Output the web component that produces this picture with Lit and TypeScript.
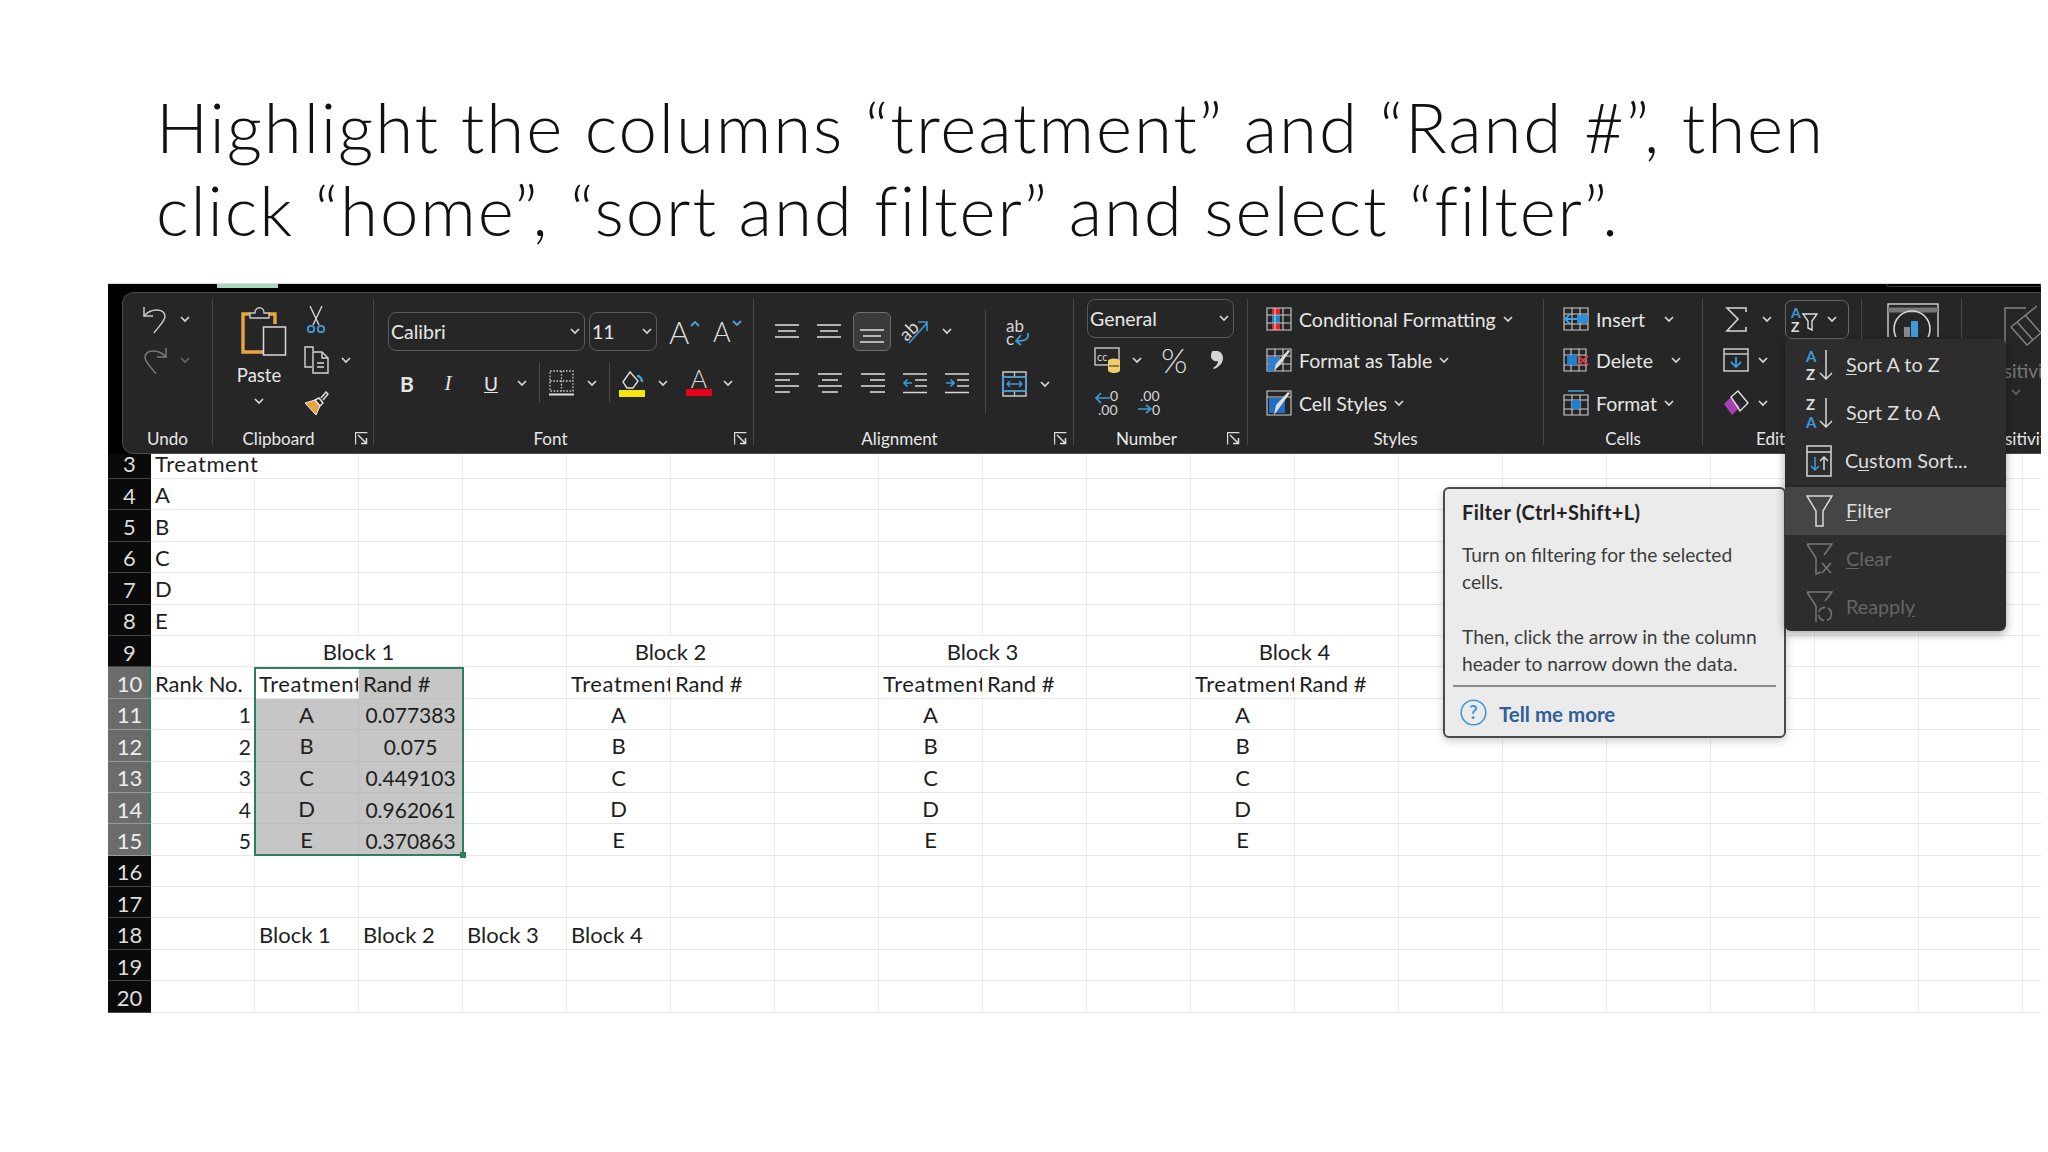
import { LitElement, html, css, svg } from "lit";
import { customElement } from "lit/decorators.js";

const W = "#d6d6d6";
const B = "#3f9bd8";
const chev = (c = "#d8d8d8") => html`<svg class="chev" width="10" height="7" viewBox="0 0 10 7" fill="none" stroke=${c} stroke-width="1.7"><path d="M1 1l4 4 4-4"/></svg>`;
const launcher = html`<svg class="launch" width="13" height="13" viewBox="0 0 13 13" fill="none" stroke="#ddd" stroke-width="1.2"><path d="M.6 12.4V.6h11.8"/><path d="M3 3l8 8M11.5 6v5.5H6" stroke-width="1.5"/></svg>`;
const lines = (w: number, h: number, l: number[][], hl = W) => html`<svg width=${w} height=${h} viewBox="0 0 ${w} ${h}" stroke=${hl} stroke-width="1.6">${l.map((a) => svg`<line x1=${a[0]} x2=${a[1]} y1=${a[2]} y2=${a[2]} stroke=${a[3] ? B : hl}/>`)}</svg>`;

const I: Record<string, unknown> = {
  undo: html`<svg width="26" height="27" viewBox="0 0 26 27" fill="none" stroke="#c9c9c9" stroke-width="1.5"><path d="M2 1v9h9"/><path d="M2 10C9 2 22 2 23 10c.5 5-7 11-11 17"/></svg>`,
  redo: html`<svg width="26" height="27" viewBox="0 0 26 27" fill="none" stroke="#7a7a7a" stroke-width="1.5"><path d="M24 1v9h-9"/><path d="M24 10C17 2 4 2 3 10c-.5 5 7 11 11 17"/></svg>`,
  paste: html`<svg class="pasteic" width="46" height="50" viewBox="0 0 46 50" fill="none"><path d="M9 8H2v38h20" stroke="#e9a63f" stroke-width="3.4"/><path d="M28 8h6v10" stroke="#e9a63f" stroke-width="3.4"/><path d="M9 12V7h5c0-7 9-7 9 0h5v5z" stroke="#c9c9c9" stroke-width="1.4" fill="#262626"/><rect x="22.5" y="21" width="22" height="28" stroke="#d9d9d9" stroke-width="1.5" fill="#262626"/></svg>`,
  cut: html`<svg width="26" height="27" viewBox="0 0 26 27" fill="none" stroke="#d6d6d6" stroke-width="1.4"><path d="M7 0l9 19M19 0l-9 19"/><circle cx="8" cy="23" r="3.2" stroke="#3f9bd8" stroke-width="1.8"/><circle cx="18" cy="23" r="3.2" stroke="#3f9bd8" stroke-width="1.8"/></svg>`,
  copy: html`<svg width="26" height="28" viewBox="0 0 26 28" fill="none" stroke="#d6d6d6" stroke-width="1.4"><path d="M10 5V1H2v20h7"/><path d="M10 6h9l6 6v15H10z"/><path d="M19 6v6h6M14 17h7M14 21h7"/></svg>`,
  brush: html`<svg width="26" height="25" viewBox="0 0 26 25" fill="none"><path d="M2 12l10-3 5 6-4 9z" fill="#e8a33f" stroke="#eee" stroke-width="1"/><path d="M12 9l5 6 3-3-4-5zM18 7l5-6 2 2-5 6" stroke="#e6e6e6" stroke-width="1.4"/></svg>`,
  borders: html`<svg width="25" height="26" viewBox="0 0 25 26" fill="none" stroke="#c8c8c8" stroke-width="1.3" stroke-dasharray="1.6 1.6"><rect x="1" y="1" width="23" height="20"/><path d="M12.5 1v20M1 11h23"/><path d="M0 24.5h25" stroke="#ddd" stroke-width="2" stroke-dasharray="none"/></svg>`,
  fill: html`<svg width="26" height="27" viewBox="0 0 26 27" fill="none"><path d="M4 12L11 2l8 9-5 7H8z" stroke="#ddd" stroke-width="1.4"/><path d="M18 6c3 0 5 3 5 6" stroke="#4aa3df" stroke-width="2.4"/><rect y="20" width="26" height="7" fill="#f5e60f"/></svg>`,
  fcolor: html`<svg width="26" height="28" viewBox="0 0 26 28"><text x="13" y="19" text-anchor="middle" font-family="Lato" font-weight="300" font-size="25" fill="#ddd">A</text><rect y="20" width="26" height="7" fill="#e8001b"/></svg>`,
  orient: html`<svg width="27" height="25" viewBox="0 0 27 25" fill="none"><text x="-1" y="19" transform="rotate(-45 7 13)" font-family="Lato" font-size="18" fill="#d6d6d6">ab</text><path d="M8 24L26 4M17 3h9v9" stroke="#3f9bd8" stroke-width="1.6"/></svg>`,
  wrap: html`<svg width="24" height="26" viewBox="0 0 24 26" fill="none"><text x="0" y="12" font-family="Lato" font-size="17" fill="#d6d6d6">ab</text><text x="0" y="25" font-family="Lato" font-size="17" fill="#d6d6d6">c</text><path d="M22 13c1 6-2 8-12 8M15 15l-5 6 5 4" stroke="#3f9bd8" stroke-width="1.8"/></svg>`,
  outd: html`<svg width="24" height="21" viewBox="0 0 24 21" fill="none"><path d="M0 1h24M12 7h12M12 13h12M0 19.5h24" stroke="#d6d6d6" stroke-width="1.6"/><path d="M9 10H1M4.500 6.500L1 10l3.500 3.500" stroke="#3f9bd8" stroke-width="1.7"/></svg>`,
  ind: html`<svg width="24" height="21" viewBox="0 0 24 21" fill="none"><path d="M0 1h24M12 7h12M12 13h12M0 19.500h24" stroke="#d6d6d6" stroke-width="1.6"/><path d="M1 10h8M5.500 6.500L9 10l-3.500 3.500" stroke="#3f9bd8" stroke-width="1.7"/></svg>`,
  merge: html`<svg width="25" height="26" viewBox="0 0 25 26" fill="none"><rect x="1" y="1" width="23" height="24" stroke="#d6d6d6" stroke-width="1.4"/><path d="M1 6h23M1 20h23M12.5 1v5M12.5 20v5" stroke="#d6d6d6" stroke-width="1.2"/><rect x="1" y="6" width="23" height="14" stroke="#3f9bd8" stroke-width="1.5"/><path d="M5 13h15M8 10l-3 3 3 3M17 10l3 3-3 3" stroke="#3f9bd8" stroke-width="1.3"/></svg>`,
  acc: html`<svg width="27" height="27" viewBox="0 0 27 27" fill="none"><rect x="1" y="1" width="24" height="17" stroke="#d6d6d6" stroke-width="1.3"/><text x="3" y="14" font-family="Lato" font-size="11" fill="#d6d6d6">cc</text><ellipse cx="20" cy="14" rx="6" ry="2.5" fill="#f0cf6b"/><path d="M14 14v9c0 4 12 4 12 0v-9z" fill="#f0cf6b"/><path d="M15 19h10" stroke="#262626"/></svg>`,
  comma: html`<svg width="13" height="18" viewBox="0 0 13 18"><path d="M3 0c6-1 10 2 10 7 0 5-4 9-9 11l-1-1c3-2 5-4 5-7-3 1-7-1-7-5 0-3 1-5 2-5z" fill="#d6d6d6"/></svg>`,
  incd: html`<svg width="26" height="26" viewBox="0 0 26 26" fill="none"><path d="M16 8H2M7 3L2 8l5 5" stroke="#3f9bd8" stroke-width="1.7"/><text x="16" y="11" font-family="Lato" font-size="14" fill="#d6d6d6">0</text><text x="4" y="25" font-family="Lato" font-size="14" fill="#d6d6d6">.00</text></svg>`,
  decd: html`<svg width="26" height="26" viewBox="0 0 26 26" fill="none"><text x="4" y="11" font-family="Lato" font-size="14" fill="#d6d6d6">.00</text><path d="M2 19h12M10 15l5 4-5 4" stroke="#3f9bd8" stroke-width="1.7"/><text x="16" y="25" font-family="Lato" font-size="14" fill="#d6d6d6">0</text></svg>`,
  cf: html`<svg width="26" height="24" viewBox="0 0 26 24" fill="none"><rect x="6" y="1" width="8" height="6" fill="#e8232a"/><rect x="6" y="17" width="8" height="6" fill="#e8232a"/><rect x="6" y="8" width="8" height="8" fill="#1f7fd0"/><path d="M1 1h24v22H1zM1 8h24M1 16h24M9 1v22M17 1v22" stroke="#cfcfcf" stroke-width="1.1"/></svg>`,
  table: html`<svg width="26" height="24" viewBox="0 0 26 24" fill="none"><path d="M1 1h24v22H1zM1 8h24M1 16h24M9 1v22M17 1v22" stroke="#cfcfcf" stroke-width="1.1"/><path d="M2 9h12v8H2zM2 17h7v6H2z" fill="#2f7fd0"/><path d="M8 23l6-6 10-14-2-1L10 16z" fill="#ddd"/></svg>`,
  cstyle: html`<svg width="26" height="26" viewBox="0 0 26 26" fill="none"><path d="M1 1h24v24H1zM1 7h24" stroke="#cfcfcf" stroke-width="1.1"/><path d="M3 8h16v15H3z" fill="#1f6fc8"/><path d="M8 25l6-8 10-14-2-1L10 15z" fill="#ddd"/></svg>`,
  insert: html`<svg width="26" height="24" viewBox="0 0 26 24" fill="none"><path d="M1 1h24v22H1zM1 7h24M1 17h24M9 1v22M17 1v22" stroke="#cfcfcf" stroke-width="1.1"/><rect x="14" y="8" width="11" height="8" fill="#2a8fdc"/><path d="M14 12H2M7 7l-5 5 5 5" stroke="#3fa3e8" stroke-width="1.9"/></svg>`,
  del: html`<svg width="26" height="24" viewBox="0 0 26 24" fill="none"><path d="M1 1h22v22H1zM1 7h22M1 17h22M8 1v22M16 1v22" stroke="#cfcfcf" stroke-width="1.1"/><rect x="4" y="7" width="10" height="10" fill="#1f7fd0"/><path d="M15 8l10 9M25 8l-10 9" stroke="#e8353a" stroke-width="1.8"/></svg>`,
  fmt: html`<svg width="26" height="26" viewBox="0 0 26 26" fill="none"><path d="M1 5h24v20H1zM1 10h24M1 19h24M9 5v20M17 5v20" stroke="#cfcfcf" stroke-width="1.1"/><rect x="9" y="10" width="8" height="9" fill="#1f7fd0"/><path d="M5 1h16" stroke="#3f9bd8" stroke-width="1.6"/></svg>`,
  sigma: html`<svg width="26" height="25" viewBox="0 0 26 25" fill="none" stroke="#d6d6d6" stroke-width="1.6"><path d="M23 5V1H4l11 11L4 24h19v-4"/></svg>`,
  efill: html`<svg width="26" height="24" viewBox="0 0 26 24" fill="none"><rect x="1" y="1" width="24" height="22" stroke="#d6d6d6" stroke-width="1.4"/><path d="M1 6h24" stroke="#d6d6d6" stroke-width="1.4"/><path d="M13 9v10M8 14l5 5 5-5" stroke="#3f9bd8" stroke-width="1.8"/></svg>`,
  eraser: html`<svg width="26" height="26" viewBox="0 0 26 26" fill="none"><path d="M1 14L9 25l8-8L8 7z" fill="#a63fb3"/><path d="M8 7l7-6 10 12-8 8z" stroke="#e2e2e2" stroke-width="1.4"/></svg>`,
  sortf: html`<svg width="27" height="27" viewBox="0 0 27 27" fill="none"><text x="0" y="12" font-family="Lato" font-weight="700" font-size="14" fill="#3f9bd8">A</text><text x="0" y="26" font-family="Lato" font-weight="700" font-size="14" fill="#ddd">Z</text><path d="M12 8h14l-5 7v9l-4-2v-7z" stroke="#ddd" stroke-width="1.4"/></svg>`,
  addin: html`<svg width="52" height="34" viewBox="0 0 52 34" fill="none"><rect x="1" y="1" width="50" height="60" stroke="#d0d0d0" stroke-width="1.4"/><path d="M1 7h50" stroke="#777" stroke-width="5"/><circle cx="25" cy="26" r="18" stroke="#d6d6d6" stroke-width="1.6"/><rect x="17" y="24" width="6" height="10" fill="#888"/><rect x="24" y="18" width="7" height="16" fill="#3f9bd8"/></svg>`,
  sens: html`<svg class="sensic" width="77" height="46" viewBox="0 0 77 46" fill="none" stroke="#858585" stroke-width="1.4"><path d="M61 3H40v43"/><path d="M46 22L72 1M46 22l16 18 15-13"/><path d="M52 17l16 18M60 10l16 18"/></svg>`,
  az: html`<svg width="27" height="32" viewBox="0 0 27 32" fill="none"><text x="0" y="13" font-family="Lato" font-weight="700" font-size="15" fill="#3f9bd8">A</text><text x="0" y="31" font-family="Lato" font-weight="700" font-size="15" fill="#ddd">Z</text><path d="M20 1v29M14 24l6 6 6-6" stroke="#d6d6d6" stroke-width="1.5"/></svg>`,
  za: html`<svg width="27" height="32" viewBox="0 0 27 32" fill="none"><text x="0" y="13" font-family="Lato" font-weight="700" font-size="15" fill="#ddd">Z</text><text x="0" y="31" font-family="Lato" font-weight="700" font-size="15" fill="#3f9bd8">A</text><path d="M20 1v29M14 24l6 6 6-6" stroke="#d6d6d6" stroke-width="1.5"/></svg>`,
  custom: html`<svg width="26" height="32" viewBox="0 0 26 32" fill="none" stroke="#d6d6d6" stroke-width="1.5"><rect x="1" y="1" width="24" height="30"/><path d="M1 7h24"/><path d="M9 12v13M5 21l4 4 4-4" stroke="#3f9bd8"/><path d="M18 25V12M14 16l4-4 4 4"/></svg>`,
  filter: html`<svg width="27" height="32" viewBox="0 0 27 32" fill="none" stroke="#d8d8d8" stroke-width="1.5"><path d="M1 1h25L17 16v15h-7V16z"/></svg>`,
  clear: html`<svg width="27" height="32" viewBox="0 0 27 32" fill="none" stroke="#777" stroke-width="1.5"><path d="M1 1h25l-8 11M1 1l9 14v16l5-2"/><path d="M16 20l9 10M25 20l-9 10"/></svg>`,
  reapply: html`<svg width="27" height="32" viewBox="0 0 27 32" fill="none" stroke="#777" stroke-width="1.5"><path d="M1 1h25l-7 9M1 1l9 14v16"/><circle cx="19" cy="23" r="6.5" stroke-dasharray="8 3"/></svg>`,
  help: html`<svg width="27" height="27" viewBox="0 0 27 27"><circle cx="13.5" cy="13.5" r="12.3" fill="none" stroke="#3f97d2" stroke-width="1.6"/><text x="13.5" y="19.5" text-anchor="middle" font-family="Lato" font-size="18" fill="#3f97d2">?</text></svg>`,
};

const COLS = "ABCDEFGHIJKLMNOPQRS".split("");
type Cell = { t: string; k?: string };
const DATA: Record<string, Cell> = {
  A3: { t: "Treatment", k: "vis" },
  A4: { t: "A" }, A5: { t: "B" }, A6: { t: "C" }, A7: { t: "D" }, A8: { t: "E" },
  A10: { t: "Rank No." }, B10: { t: "Treatment", k: "tr" }, C10: { t: "Rand #" },
  E10: { t: "Treatment", k: "tr" }, F10: { t: "Rand #" }, H10: { t: "Treatment", k: "tr" }, I10: { t: "Rand #" }, K10: { t: "Treatment", k: "tr" }, L10: { t: "Rand #" },
  B18: { t: "Block 1" }, C18: { t: "Block 2" }, D18: { t: "Block 3" }, E18: { t: "Block 4" },
};
const vals = ["0.077383", "0.075", "0.449103", "0.962061", "0.370863"];
["A", "B", "C", "D", "E"].forEach((l, i) => {
  const r = 11 + i;
  DATA["A" + r] = { t: String(i + 1), k: "r" };
  DATA["C" + r] = { t: vals[i], k: "c" };
  for (const c of ["B", "E", "H", "K"]) DATA[c + r] = { t: l, k: "c" };
});
const MERGE: Record<string, string> = { B: "Block 1", E: "Block 2", H: "Block 3", K: "Block 4" };

@customElement("app-root")
export class AppRoot extends LitElement {
  static styles = css`
    :host { display: block; width: 2048px; height: 1152px; background: #fff; overflow: hidden; font-family: Lato, "Open Sans", sans-serif; }
    .title { margin: 0; padding: 86px 0 32px 156px; font-weight: 300; font-size: 69px; letter-spacing: 1.9px; line-height: 82.5px; color: #111; height: 165px; white-space: nowrap; }
    .shot { position: relative; margin-left: 108px; width: 1933px; overflow: hidden; }
    .band { height: 9px; background: #000; display: flex; border-top: 1px solid #ddd; box-sizing: border-box; }
    .tab { margin-left: 109px; width: 61px; height: 4px; background: #a9d6c0; }
    .tab2 { margin-left: auto; width: 155px; height: 3px; border: 1px solid #3a3a3a; border-top: none; border-radius: 0 0 0 6px; box-sizing: border-box; }
    .rwrap { background: #000; padding-left: 14px; }
    .ribbon { height: 162px; background: #262626; border: 1px solid #4a4a4a; border-right: none; border-radius: 12px 0 0 12px; display: flex; box-sizing: border-box; padding-top: 6px; color: #e6e6e6; font-size: 19.5px; white-space: nowrap; }
    .g { flex: none; height: 146px; display: flex; flex-direction: column; box-sizing: border-box; border-right: 1px solid #484848; }
    .body { flex: 1; min-height: 0; }
    .lab { height: 20px; display: flex; align-items: center; font-size: 17px; color: #e8e8e8; transform: translateY(3px); }
    .lab span { flex: 1; text-align: center; }
    .launch { flex: none; }
    .g3 { display: grid; grid-template-rows: 40px 42px 44px; align-items: center; justify-items: start; }
    .undo { width: 90px; } .undo .g3 { padding-left: 19px; grid-template-columns: 38px auto; }
    .clip { width: 161px; } .clip .body { padding-left: 20px; display: flex; }
    .pastec { width: 52px; margin-right: 18px; display: flex; flex-direction: column; align-items: center; padding-top: 7px; }
    .pasteic { margin-left: 10px; }
    .pastec span { margin-top: 8px; font-size: 18.5px; }
    .pastec .chev { margin-top: 12px; }
    .clip .g3 { grid-template-columns: 38px auto; }
    .clip .lab .launch { margin: 0 5px 0 11px; }
    .font { width: 380px; }
    .rows { padding-top: 13px; }
    .rw { height: 39px; display: grid; align-items: center; justify-items: start; }
    .rw + .rw { margin-top: 12px; height: 40px; }
    .dd { box-sizing: border-box; height: 39px; border: 1.4px solid #5a5a5a; border-radius: 8px; display: flex; align-items: center; justify-content: space-between; padding: 0 4px 0 2px; font-size: 19.5px; }
    .f1 { padding-left: 14px; grid-template-columns: 201px 80px 44px auto; }
    .d1 { width: 197px; } .d2 { width: 68px; }
    .f2 { padding-left: 21px; grid-template-columns: 41px 43px 38px 22px 10px 38px 22px 10px 39px 28px 37px auto; }
    .ff { width: 24px; text-align: center; font-size: 21px; }
    .bold { font-weight: 700; } .ital { font-family: "Liberation Serif", serif; font-style: italic; } .und { text-decoration: underline; font-size: 19px; }
    .vs { width: 1px; height: 40px; background: #4a4a4a; }
    .AA { font-weight: 300; font-size: 31px; line-height: 30px; position: relative; display: block; color: #ddd; }
    .AA.sm { font-size: 27px; }
    .AA svg { position: absolute; left: 100%; top: 3px; margin-left: 1px; }
    .font .lab .launch { margin: 0 6px 0 7px; }
    .align { width: 320px; } .align .body { display: flex; }
    .al { width: 231px; }
    .a1 { padding-left: 21px; grid-template-columns: 42px 36px 48px 41px auto; }
    .a2 { padding-left: 21px; grid-template-columns: 43px 43px 42px 42px auto; }
    .a1b { box-sizing: border-box; width: 38px; height: 39px; border: 1.4px solid #6e6e6e; border-radius: 6px; background: #3a3a3a; display: flex; align-items: flex-end; justify-content: center; padding-bottom: 5px; }
    .vl { width: 1px; height: 103px; margin-top: 11px; background: #4a4a4a; }
    .ar { padding-top: 21px; }
    .ar > svg { display: block; margin-left: 20px; }
    .mrg { margin: 25px 0 0 16px; display: grid; grid-template-columns: 38px auto; align-items: center; justify-items: start; }
    .align .lab .launch { margin: 0 6px 0 9px; }
    .number { width: 174px; }
    .number .dd { margin: 0 0 0 13px; width: 147px; height: 39px; }
    .n2 { padding-left: 20px; height: 42px; margin-top: 1px; display: grid; grid-template-columns: 38px 29px 49px auto; align-items: center; justify-items: start; }
    .n3 { padding-left: 20px; height: 43px; display: grid; grid-template-columns: 42px auto; align-items: center; justify-items: start; }
    .pct { font-weight: 300; font-size: 34px; line-height: 34px; color: #ddd; }
    .number .lab .launch { margin: 0 7px 0 8px; }
    .styles { width: 296px; } .styles .g3 { padding-left: 18px; }
    .it { display: flex; align-items: center; gap: 7px; }
    .cells { width: 159px; } .cells .g3 { padding-left: 19px; }
    .c3 { display: grid; align-items: center; justify-items: start; grid-template-columns: 33px 68px auto; }
    .c3.d { grid-template-columns: 33px 75px auto; }
    .edit { width: 159px; } .edit .g3 { padding-left: 20px; }
    .e1 { display: grid; grid-template-columns: 39px 23px auto; align-items: center; justify-items: start; }
    .e2 { display: grid; grid-template-columns: 35px auto; align-items: center; justify-items: start; }
    .sortb { box-sizing: border-box; width: 64px; height: 39px; border: 1.4px solid #666; border-radius: 7px; display: flex; align-items: center; gap: 9px; padding-left: 5px; }
    .addin { width: 100px; } .addin .body { padding: 4px 0 0 25px; overflow: hidden; }
    .sens { width: 108px; border-right: none; } .sens .body { padding-top: 6px; display: flex; flex-direction: column; align-items: center; }
    .sensic { align-self: flex-start; margin-left: 3px; flex: none; }
    .stx { color: #777; font-size: 19px; margin-top: 8px; }
    .sens .chev { margin-top: 7px; }
    .sheet { display: grid; grid-template-columns: 43px repeat(19, 104px); grid-template-rows: 25px repeat(17, 31.4px); font-size: 22px; color: #1e1e1e; position: relative; }
    .rh { background: #0a0a0a; color: #dcdcdc; border-bottom: 1.4px solid #444; box-sizing: border-box; display: flex; align-items: center; justify-content: center; padding-top: 2px; }
    .rh.on { background: #6b6b6b; color: #eee; border-bottom-color: #999; box-shadow: inset -2px 0 0 #2e7d5b; }
    .rh.first { padding: 0 0 5px; }
    .cell { box-sizing: border-box; border-right: 1px solid #ececef; border-bottom: 1px solid #e6e6e6; padding: 2px 4px 0; line-height: 1; display: flex; align-items: center; overflow: hidden; white-space: nowrap; }
    .cell.first { padding: 0 4px 5px; }
    .cell.vis { overflow: visible; border-right: none; }
    .cell.r { justify-content: flex-end; padding-right: 3px; font-size: 21px; }
    .cell.c, .cell.m { justify-content: center; }
    .cell.m { grid-column: span 2; }
    .cell.tr, .cell.vis { letter-spacing: .6px; }
    .cell.sel { background: #c6c6c6; border-color: #bdbdbd; }
    .cell.num { font-size: 21px; }
    .selbox { position: absolute; left: 146px; top: 213px; width: 210px; height: 189px; border: 2px solid #2e7d5b; box-sizing: border-box; pointer-events: none; }
    .selbox i { position: absolute; right: -4px; bottom: -4px; width: 6px; height: 6px; background: #2e7d5b; }
    .menu { position: absolute; left: 1677px; top: 56px; width: 221px; height: 292px; box-sizing: border-box; padding-top: 2px; background: #2d2d2d; border-radius: 6px; box-shadow: 0 3px 10px rgba(0,0,0,.35); color: #dedede; font-size: 19.8px; z-index: 3; }
    .mi { height: 48px; display: flex; align-items: center; gap: 13px; padding-left: 21px; }
    .mi span { transform: translateY(-1px); }
    .mi.hi { background: #454545; }
    .mi.dim { color: #666; }
    .msep { height: 2px; background: #272727; }
    .mi u { text-underline-offset: 2px; }
    .tip { position: absolute; left: 1335px; top: 204px; width: 343px; height: 251px; box-sizing: border-box; border: 2px solid #4a4a4a; border-radius: 6px; background: #ebebeb; box-shadow: 0 3px 10px rgba(0,0,0,.2); padding: 10px 17px 0; color: #3c3c3c; font-size: 19.2px; z-index: 2; }
    .tip h4 { margin: 0; font-size: 20px; letter-spacing: .4px; line-height: 26px; color: #222; font-weight: 700; }
    .tip p { margin: 16px 0 0; line-height: 27.3px; white-space: nowrap; }
    .tip hr { margin: 8px -9px 0; height: 1.4px; border: none; background: #8a8a8a; }
    .tf { display: flex; align-items: center; gap: 12px; margin: 12px 0 0 -2px; color: #2f5f9a; font-weight: 700; font-size: 20.5px; }
    .tf span { transform: translateY(2px); }
  `;

  private sheet() {
    const out: unknown[] = [];
    for (let r = 3; r <= 20; r++) {
      const first = r === 3 ? "first" : "";
      out.push(html`<div class="rh ${r >= 10 && r <= 15 ? "on" : ""} ${first}">${r}</div>`);
      let i = 0;
      while (i < COLS.length) {
        const c = COLS[i];
        if (r === 9 && MERGE[c]) {
          out.push(html`<div class="cell m">${MERGE[c]}</div>`);
          i += 2;
          continue;
        }
        const d = DATA[c + r];
        const sel = (r === 10 && c === "C") || (r >= 11 && r <= 15 && (c === "B" || c === "C"));
        const num = r >= 11 && r <= 15 && c === "C" ? "num" : "";
        out.push(html`<div class="cell ${d?.k ?? ""} ${sel ? "sel" : ""} ${num} ${first}">${d?.t ?? ""}</div>`);
        i++;
      }
    }
    return out;
  }

  render() {
    const t = [[0, 24, 1], [3, 21, 7], [0, 24, 13]];
    return html`
      <h1 class="title">Highlight the columns “treatment” and “Rand #”, then<br />click “home”, “sort and filter” and select “filter”.</h1>
      <div class="shot">
        <div class="band"><div class="tab"></div><div class="tab2"></div></div>
        <div class="rwrap"><div class="ribbon">
          <div class="g undo"><div class="body g3">${I.undo}${chev()}${I.redo}${chev("#666")}</div><div class="lab"><span>Undo</span></div></div>
          <div class="g clip"><div class="body">
              <div class="pastec">${I.paste}<span>Paste</span>${chev()}</div>
              <div class="g3">${I.cut}<i></i>${I.copy}${chev()}${I.brush}</div>
            </div><div class="lab"><span>Clipboard</span>${launcher}</div></div>
          <div class="g font"><div class="body rows">
              <div class="rw f1">
                <div class="dd d1"><span>Calibri</span>${chev()}</div>
                <div class="dd d2"><span>11</span>${chev()}</div>
                <span class="AA">A<svg width="10" height="7" viewBox="0 0 10 7" fill="none" stroke="#4aa3df" stroke-width="1.8"><path d="M1 6l4-4 4 4"/></svg></span>
                <span class="AA sm">A<svg width="10" height="7" viewBox="0 0 10 7" fill="none" stroke="#4aa3df" stroke-width="1.8"><path d="M1 1l4 4 4-4"/></svg></span>
              </div>
              <div class="rw f2">
                <span class="ff bold">B</span><span class="ff ital">I</span><span class="ff und">U</span>${chev()}<i class="vs"></i>${I.borders}${chev()}<i class="vs"></i>${I.fill}${chev()}${I.fcolor}${chev()}
              </div>
            </div><div class="lab"><span>Font</span>${launcher}</div></div>
          <div class="g align"><div class="body">
              <div class="al rows">
                <div class="rw a1">${lines(24, 16, t)}${lines(24, 16, t)}<div class="a1b">${lines(24, 16, t)}</div>${I.orient}${chev()}</div>
                <div class="rw a2">
                  ${lines(24, 21, [[0, 24, 1], [0, 15, 7], [0, 24, 13], [0, 15, 19]])}
                  ${lines(24, 21, [[0, 24, 1], [4, 20, 7], [0, 24, 13], [4, 20, 19]])}
                  ${lines(24, 21, [[0, 24, 1], [9, 24, 7], [0, 24, 13], [9, 24, 19]])}
                  ${I.outd}
                  ${I.ind}
                </div>
              </div>
              <i class="vl"></i>
              <div class="ar">${I.wrap}<div class="mrg">${I.merge}${chev()}</div></div>
            </div><div class="lab"><span>Alignment</span>${launcher}</div></div>
          <div class="g number"><div class="body">
              <div class="dd"><span>General</span>${chev()}</div>
              <div class="n2">${I.acc}${chev()}<span class="pct">%</span>${I.comma}</div>
              <div class="n3">${I.incd}${I.decd}</div>
            </div><div class="lab"><span>Number</span>${launcher}</div></div>
          <div class="g styles"><div class="body g3">
              <div class="it">${I.cf}<span>Conditional Formatting</span>${chev()}</div>
              <div class="it">${I.table}<span>Format as Table</span>${chev()}</div>
              <div class="it">${I.cstyle}<span>Cell Styles</span>${chev()}</div>
            </div><div class="lab"><span>Styles</span></div></div>
          <div class="g cells"><div class="body g3">
              <div class="c3">${I.insert}<span>Insert</span>${chev()}</div>
              <div class="c3 d">${I.del}<span>Delete</span>${chev()}</div>
              <div class="c3">${I.fmt}<span>Format</span>${chev()}</div>
            </div><div class="lab"><span>Cells</span></div></div>
          <div class="g edit"><div class="body g3">
              <div class="e1">${I.sigma}${chev()}<div class="sortb">${I.sortf}${chev()}</div></div>
              <div class="e2">${I.efill}${chev()}</div>
              <div class="e2">${I.eraser}${chev()}</div>
            </div><div class="lab"><span>Editing</span></div></div>
          <div class="g addin"><div class="body">${I.addin}</div><div class="lab"></div></div>
          <div class="g sens"><div class="body">${I.sens}<span class="stx">Sensitivity</span>${chev("#666")}</div><div class="lab"><span>Sensitivity</span></div></div>
        </div></div>
        <div class="sheet">${this.sheet()}<div class="selbox"><i></i></div></div>
        <div class="tip">
          <h4>Filter (Ctrl+Shift+L)</h4>
          <p>Turn on filtering for the selected<br />cells.<br /><br />Then, click the arrow in the column<br />header to narrow down the data.</p>
          <hr />
          <div class="tf">${I.help}<span>Tell me more</span></div>
        </div>
        <div class="menu">
          <div class="mi">${I.az}<span><u>S</u>ort A to Z</span></div>
          <div class="mi">${I.za}<span>S<u>o</u>rt Z to A</span></div>
          <div class="mi">${I.custom}<span>C<u>u</u>stom Sort...</span></div>
          <div class="msep"></div>
          <div class="mi hi">${I.filter}<span><u>F</u>ilter</span></div>
          <div class="mi dim">${I.clear}<span><u>C</u>lear</span></div>
          <div class="mi dim">${I.reapply}<span>Reappl<u>y</u></span></div>
        </div>
      </div>
    `;
  }
}
